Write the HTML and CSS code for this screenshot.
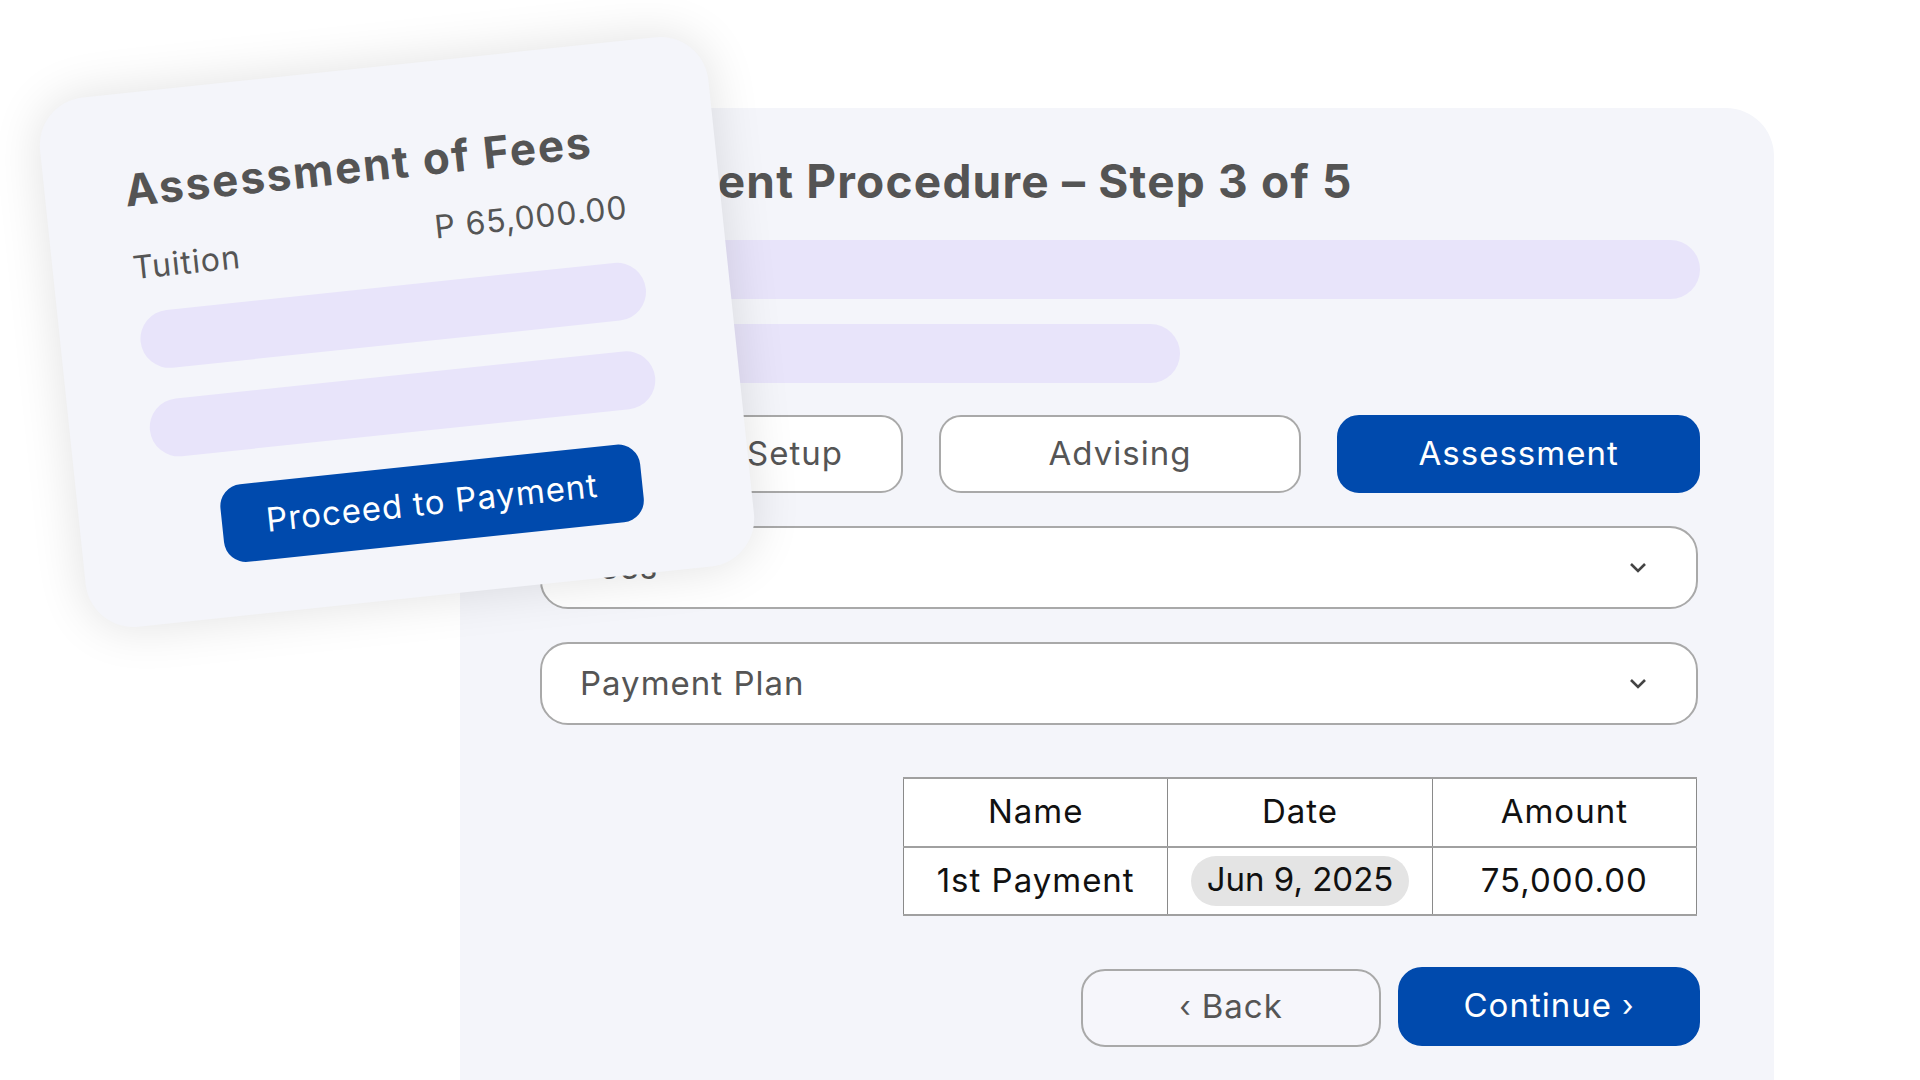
FILE: index.html
```html
<!DOCTYPE html>
<html lang="en">
<head>
<meta charset="utf-8">
<title>Enrollment Procedure</title>
<link rel="stylesheet" href="styles.css">
</head>
<body>
<div class="stage">
  <main class="panel">
    <h1 class="title">Enrollment Procedure – Step 3 of 5</h1>
    <div class="bar bar-long"></div>
    <div class="bar bar-short"></div>
    <div class="tabs">
      <div class="tab">Account Setup</div>
      <div class="tab">Advising</div>
      <div class="tab tab-active">Assessment</div>
    </div>
    <div class="select">
      <span class="select-label">Fees</span>
      <svg class="chev" width="18" height="11" viewBox="0 0 18 11"><polyline points="2,2 9,9 16,2" fill="none" stroke="#444" stroke-width="2.6"/></svg>
    </div>
    <div class="select">
      <span class="select-label">Payment Plan</span>
      <svg class="chev" width="18" height="11" viewBox="0 0 18 11"><polyline points="2,2 9,9 16,2" fill="none" stroke="#444" stroke-width="2.6"/></svg>
    </div>
    <table class="plan">
      <thead>
        <tr><th>Name</th><th>Date</th><th>Amount</th></tr>
      </thead>
      <tbody>
        <tr><td>1st Payment</td><td><span class="date-pill">Jun 9, 2025</span></td><td>75,000.00</td></tr>
      </tbody>
    </table>
    <div class="actions">
      <button class="btn btn-outline"><span class="chevron">‹</span> Back</button>
      <button class="btn btn-primary">Continue <span class="chevron">›</span></button>
    </div>
  </main>

  <section class="card">
    <h2 class="card-title">Assessment of Fees</h2>
    <div class="fee-row">
      <span class="fee-name">Tuition</span>
      <span class="fee-amount">P 65,000.00</span>
    </div>
    <div class="card-bar"></div>
    <div class="card-bar"></div>
    <button class="card-btn">Proceed to Payment</button>
  </section>
</div>
</body>
</html>
```

FILE: styles.css
```css
* { box-sizing: border-box; }

body {
  margin: 0;
  background: #ffffff;
  font-family: "Inter", "Open Sans", sans-serif;
  color: #555555;
}

.stage {
  position: relative;
  width: 1920px;
  height: 1080px;
  overflow: hidden;
  padding: 108px 0 0 460px;
}

.panel {
  width: 1314px;
  height: 1100px;
  background: #f4f5fa;
  border-radius: 48px;
  padding: 46px 74px 0 80px;
  display: flex;
  flex-direction: column;
}

.title {
  margin: 0 0 32px 0;
  font-size: 46px;
  line-height: 54px;
  font-weight: 700;
  letter-spacing: 1.2px;
  color: #545454;
  white-space: nowrap;
}

.bar {
  height: 59px;
  border-radius: 30px;
  background: #e8e4fa;
}
.bar-long { width: 1160px; margin-bottom: 25px; }
.bar-short { width: 640px; margin-bottom: 32px; }

.tabs {
  display: grid;
  grid-template-columns: repeat(3, 1fr);
  gap: 36px;
  margin-bottom: 33px;
}

.tab {
  height: 78px;
  border: 2px solid #a9a9a9;
  border-radius: 22px;
  background: #ffffff;
  display: flex;
  align-items: center;
  justify-content: center;
  padding-bottom: 3px;
  font-size: 33px;
  letter-spacing: 1px;
  color: #555555;
}
.tab-active {
  background: #004aad;
  border-color: #004aad;
  color: #ffffff;
}

.select {
  height: 83px;
  width: 1158px;
  border: 2px solid #a9a9a9;
  border-radius: 28px;
  background: #ffffff;
  display: flex;
  align-items: center;
  justify-content: space-between;
  padding: 0 49px 0 38px;
  margin-bottom: 33px;
  font-size: 33px;
  letter-spacing: 1px;
  color: #555555;
}
.select-label { margin-bottom: 2px; }
.select + .select { margin-bottom: 52px; }
.chev { display: block; }

.plan {
  width: 794px;
  margin: 0 3px 51px auto;
  border-collapse: collapse;
  background: #ffffff;
  font-size: 33px;
  letter-spacing: 1px;
  color: #111111;
}
.plan th, .plan td {
  width: 33.33%;
  text-align: center;
  font-weight: 400;
  border-left: 1px solid #8a8a8a;
  border-right: 1px solid #8a8a8a;
  padding: 0 0 3px 0;
}
.plan th { height: 69px; border-top: 2px solid #a0a0a0; border-bottom: 2px solid #a0a0a0; }
.plan td { height: 68px; border-bottom: 2px solid #a0a0a0; }
.plan td:nth-child(2) { padding: 0; }

.date-pill {
  display: inline-block;
  height: 50px;
  line-height: 46px;
  padding: 0 16px;
  border-radius: 25px;
  background: #e4e4e4;
  letter-spacing: 0;
}

.actions {
  display: flex;
  justify-content: flex-end;
  align-items: flex-start;
  gap: 17px;
}

.btn {
  font-family: inherit;
  font-size: 33px;
  letter-spacing: 1px;
  border-radius: 24px;
  display: flex;
  align-items: center;
  justify-content: center;
  gap: 10px;
  padding: 0 0 4px 0;
  cursor: pointer;
}
.btn-outline {
  width: 300px;
  height: 78px;
  margin-top: 2px;
  background: #f6f6fb;
  border: 2px solid #a9a9a9;
  color: #555555;
}
.btn-primary {
  width: 302px;
  height: 79px;
  background: #004aad;
  border: 2px solid #004aad;
  color: #ffffff;
}
.chevron { font-size: 30px; }

.card {
  position: absolute;
  left: 61px;
  top: 66px;
  width: 672px;
  height: 532px;
  padding: 71px 84px 0 80px;
  background: #f4f5fa;
  border-radius: 48px;
  transform: rotate(-6deg);
  box-shadow: 0 0 50px rgba(0, 0, 0, 0.12);
}

.card-title {
  margin: 0;
  font-size: 44px;
  line-height: 52px;
  font-weight: 700;
  letter-spacing: 2px;
  color: #545454;
  white-space: nowrap;
}

.fee-row {
  display: flex;
  justify-content: space-between;
  align-items: flex-start;
  padding-right: 10px;
  margin-top: 24px;
  font-size: 32px;
  line-height: 38px;
  letter-spacing: 0.8px;
  color: #555555;
}
.fee-name { margin-top: 9px; letter-spacing: 1px; }

.card-bar {
  height: 58px;
  border-radius: 29px;
  background: #e8e4fa;
  margin-top: 31px;
}
.fee-row + .card-bar { margin-top: 26px; }

.card-btn {
  display: block;
  margin: 34px 0 0 62px;
  width: 422px;
  height: 78px;
  border: none;
  border-radius: 22px;
  background: #004aad;
  color: #ffffff;
  font-family: inherit;
  font-size: 33px;
  letter-spacing: 1px;
  padding: 0 0 3px 0;
}
```
